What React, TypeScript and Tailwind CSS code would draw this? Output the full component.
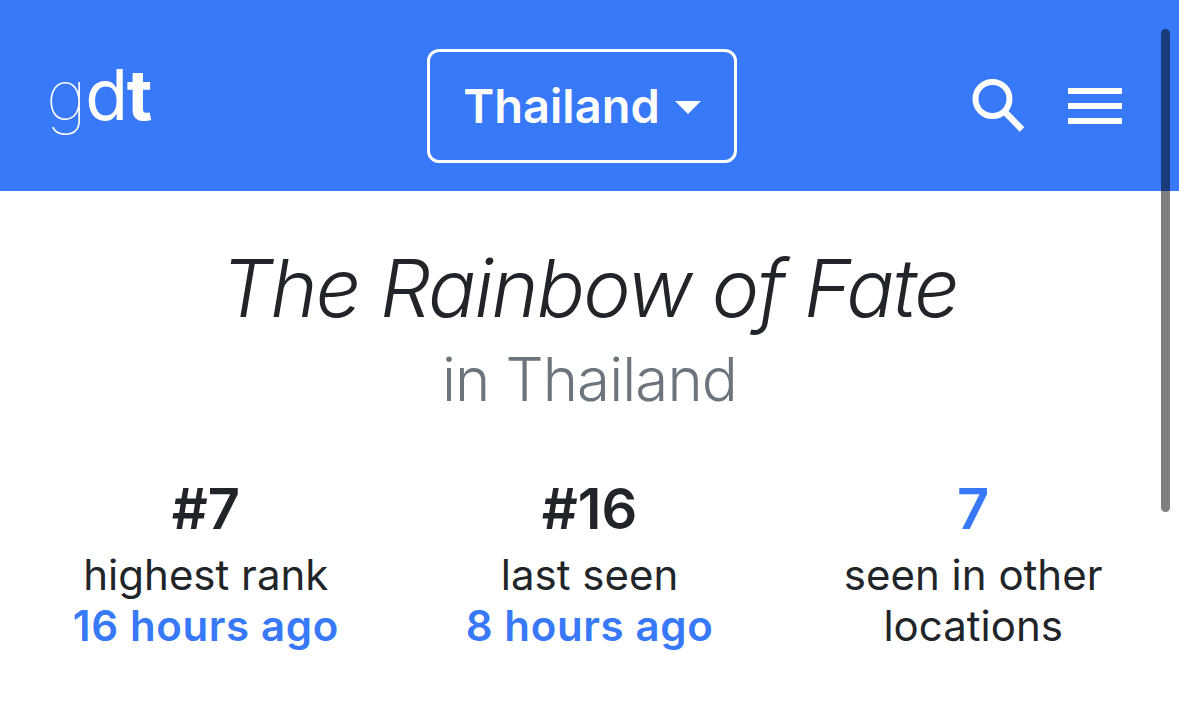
import React from 'react';

const stats = [
  { value: '#7', label: 'highest rank', sub: '16 hours ago', link: false },
  { value: '#16', label: 'last seen', sub: '8 hours ago', link: false },
  { value: '7', label: 'seen in other', sub: 'locations', link: true },
];

function SearchIcon() {
  return (
    <svg width="56" height="56" viewBox="0 0 56 56" fill="none" stroke="white" aria-hidden="true">
      <circle cx="22.500" cy="21" r="17" strokeWidth="6" />
      <path d="M34.500 33.500 L52 51.500" strokeWidth="6.500" />
    </svg>
  );
}

export default function App() {
  return (
    <div className="relative h-[712px] overflow-hidden bg-white font-['Inter',sans-serif] text-[#212529]">
      {/* Navbar */}
      <header className="flex h-[191px] items-center bg-[#3779f8] pl-[46px] pr-[57px] pt-[21px] text-white">
        <div className="mb-[23px] w-[381px] text-[70px] leading-none tracking-[-0.02em]">
          <span className="font-thin">g</span>
          <span className="font-normal">d</span>
          <span className="font-bold">t</span>
        </div>
        <button className="flex h-[114px] w-[310px] items-center justify-center gap-[15px] rounded-[12px] border-[3px] border-white text-[47px] font-semibold">
          Thailand
          <span className="mt-[2px] border-x-[13px] border-t-[13px] border-x-transparent border-t-white" />
        </button>
        <div className="ml-auto flex items-center gap-[42px]">
          <SearchIcon />
          <div className="flex w-[54px] flex-col gap-[9px]">
            <div className="h-[6px] bg-white" />
            <div className="h-[6px] bg-white" />
            <div className="h-[6px] bg-white" />
          </div>
        </div>
      </header>

      {/* Title */}
      <main className="px-[14px] pt-[42px] text-center">
        <h1 className="text-[80px] font-light italic leading-[110px] tracking-[-0.022em]">The Rainbow of Fate</h1>
        <h2 className="text-[60px] font-light leading-[72px] tracking-[-0.015em] text-[#6c757d]">in Thailand</h2>

        <div className="mt-[54px] grid grid-cols-3">
          {stats.map((s) => (
            <div key={s.value} className="flex flex-col items-center">
              <div className={`text-[56px] font-semibold leading-[80px] ${s.link ? 'text-[#3779f8]' : ''}`}>{s.value}</div>
              <div className="text-[42px] leading-[51px]">{s.label}</div>
              <div className={`text-[42px] leading-[51px] ${s.link ? '' : 'font-semibold tracking-[0.015em] text-[#3779f8]'}`}>{s.sub}</div>
            </div>
          ))}
        </div>
      </main>

      {/* Overlay scrollbar */}
      <div className="absolute left-[1161px] top-[29px] h-[483px] w-[9px] rounded-full bg-black/50" />
    </div>
  );
}
